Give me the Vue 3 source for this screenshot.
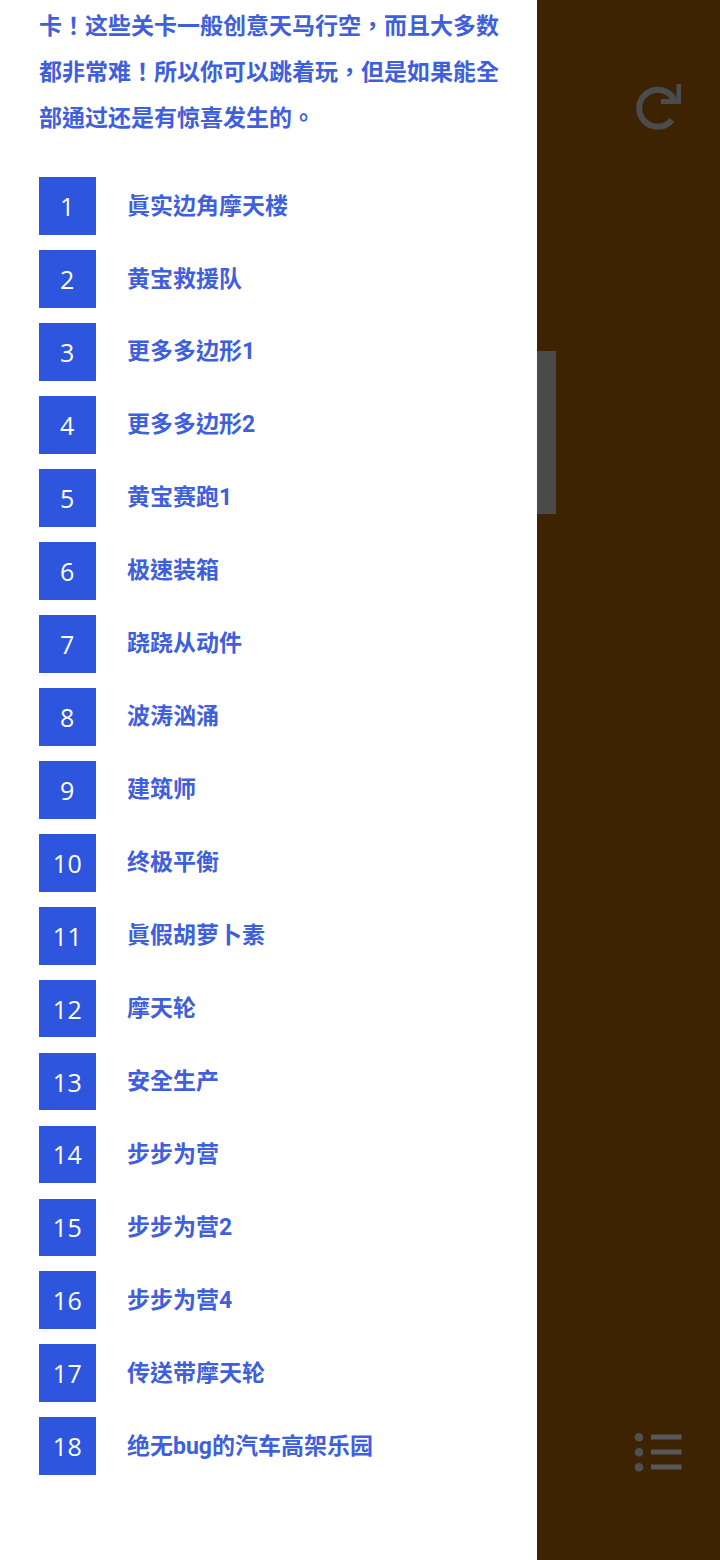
<script setup>
const levels = ['眞实边角摩天楼','黄宝救援队','更多多边形1','更多多边形2','黄宝赛跑1','极速装箱','跷跷从动件','波涛汹涌','建筑师','终极平衡','眞假胡萝卜素','摩天轮','安全生产','步步为营','步步为营2','步步为营4','传送带摩天轮','绝无bug的汽车高架乐园']
</script>

<template>
  <div class="screen">
    <main class="panel">
      <p class="intro">卡！这些关卡一般创意天马行空，而且大多数都非常难！所以你可以跳着玩，但是如果能全部通过还是有惊喜发生的。</p>
      <ol class="levels">
        <li v-for="(name, i) in levels" :key="i" class="level">
          <span class="num">{{ i + 1 }}</span>
          <span class="name">{{ name }}</span>
        </li>
      </ol>
    </main>
    <aside class="side">
      <div class="tab"></div>
      <svg class="reload" width="50" height="48" viewBox="0 0 50 48" fill="none">
        <path d="M40 36A18.500 18.500 0 1 1 42 15.500" stroke="#4a4c50" stroke-width="6"/>
        <path d="M49 0V20H29V15H44.500V0Z" fill="#4a4c50"/>
      </svg>
      <svg class="menu" width="48" height="40" viewBox="0 0 48 40">
        <g fill="#4e5056">
          <circle cx="5" cy="4.300" r="4.300"/><circle cx="5" cy="19.300" r="4.300"/><circle cx="5" cy="34.300" r="4.300"/>
        </g>
        <g fill="#58585a">
          <rect x="17" y="1.500" width="30.500" height="5"/><rect x="17" y="16.500" width="30.500" height="5"/><rect x="17" y="31.500" width="30.500" height="5"/>
        </g>
      </svg>
    </aside>
  </div>
</template>

<style scoped>
.screen {
  display: flex;
  width: 720px;
  height: 1560px;
  overflow: hidden;
  font-family: Roboto, "Noto Sans CJK TC", sans-serif;
}
.panel {
  width: 537px;
  flex: none;
  box-sizing: border-box;
  padding: 4px 38px 0 39px;
  background: #fff;
  color: #3f60dc;
}
.intro {
  margin: 0;
  font-size: 23px;
  line-height: 46px;
  font-weight: 700;
}
.levels {
  list-style: none;
  margin: 35.200px 0 0;
  padding: 0;
  display: flex;
  flex-direction: column;
  gap: 15.170px;
}
.level {
  display: flex;
  align-items: center;
  gap: 31px;
  height: 57.800px;
}
.num {
  width: 57px;
  height: 57.800px;
  flex: none;
  display: flex;
  align-items: center;
  justify-content: center;
  letter-spacing: 0.5px;
  background: #2e55dd;
  color: #fff;
  font-family: "Open Sans", sans-serif;
  font-size: 25px;
}
.name {
  font-size: 23px;
  font-weight: 700;
  line-height: 30px;
  padding-top: 1px;
}
.side {
  position: relative;
  flex: 1;
  background: #3d2302;
}
.tab {
  position: absolute;
  left: 0;
  top: 351px;
  width: 19px;
  height: 163px;
  background: #4b4b4c;
}
.reload {
  position: absolute;
  left: 95px;
  top: 84px;
}
.menu {
  position: absolute;
  left: 97px;
  top: 1433px;
}
</style>
